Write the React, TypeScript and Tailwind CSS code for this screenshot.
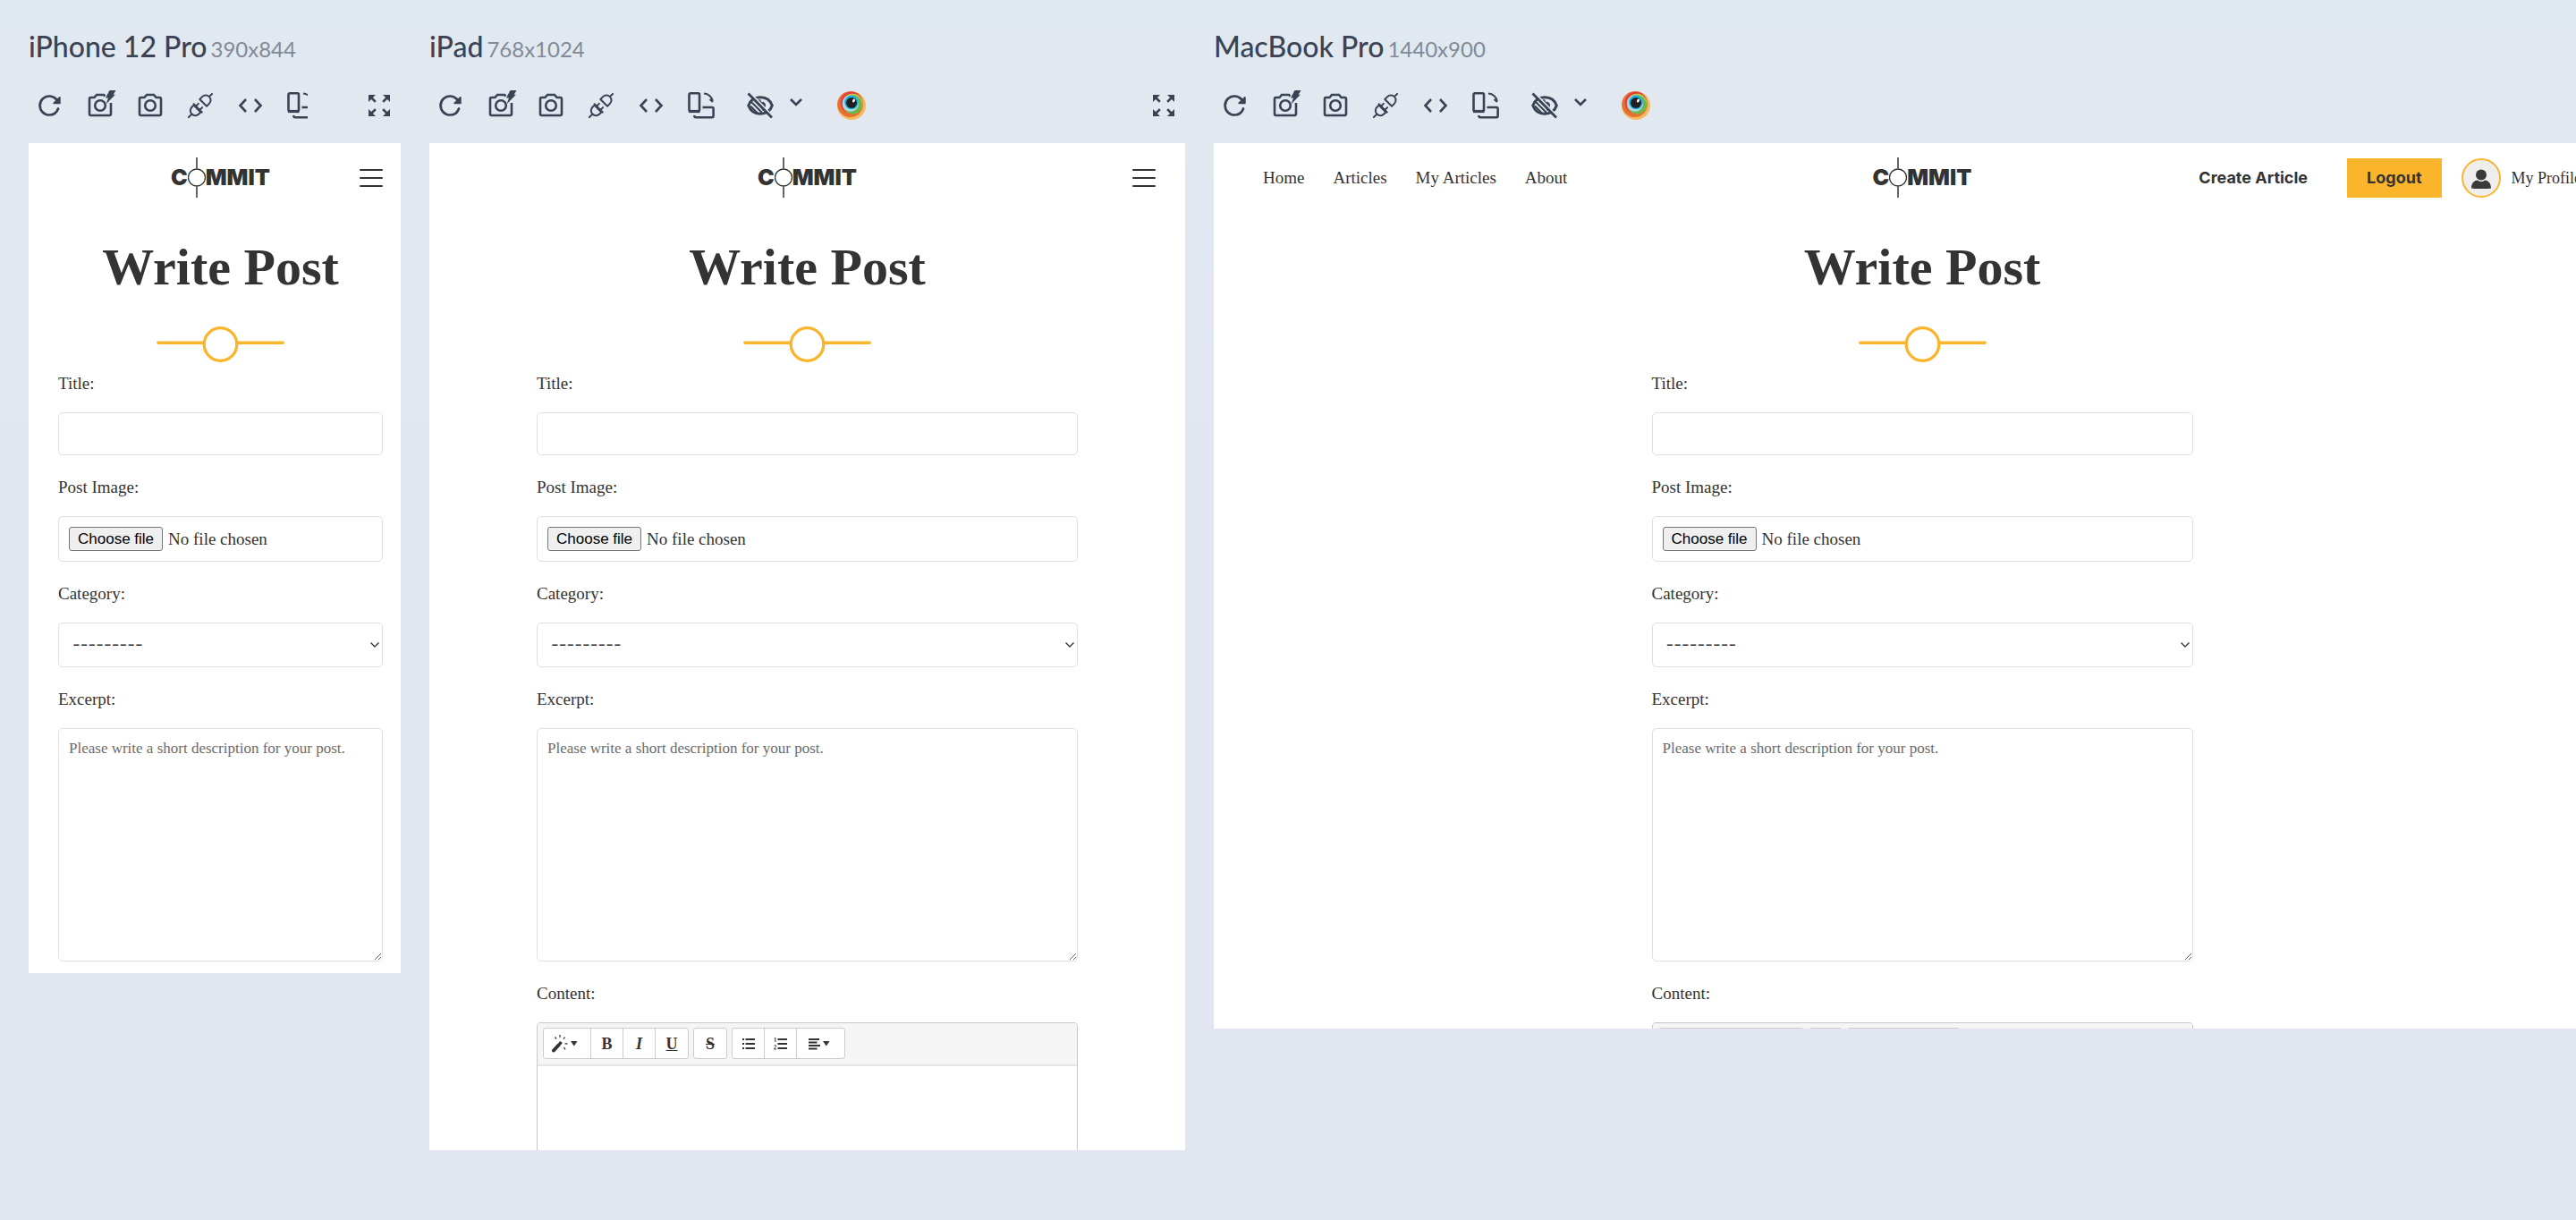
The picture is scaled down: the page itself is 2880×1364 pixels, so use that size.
import { useId } from "react";
import type { ReactNode } from "react";
import { MdZoomOutMap } from "react-icons/md";

const serif = "font-['Liberation_Serif',serif]";

/* ---------- device toolbar icons ---------- */

function ReloadIcon() {
  return (
    <svg viewBox="0 0 512 512" className="h-7 w-7" aria-hidden="true">
      <path
        d="M400 148l-21.12-24.57A191.43 191.43 0 00240 64C134 64 48 150 48 256s86 192 192 192a192.09 192.09 0 00181.07-128"
        fill="none"
        stroke="currentColor"
        strokeWidth="50"
        strokeLinecap="round"
      />
      <path
        d="M470 90V208a16 16 0 01-16 16H332c-14 0-21-17-11-27L443 79C453 69 470 76 470 90z"
        fill="currentColor"
      />
    </svg>
  );
}

function CameraIcon({ flash = false }: { flash?: boolean }) {
  return (
    <svg viewBox="0 0 32 32" className="h-8 w-8 overflow-visible" aria-hidden="true" fill="none">
      <path
        d={
          flash
            ? "M28 13v12.500a1.500 1.500 0 01-1.500 1.500h-21A1.500 1.500 0 014 25.500v-17A1.500 1.500 0 015.500 7H9.500l2.500-3h8l1.500 1.500"
            : "M5.500 7H9.500l2.500-3h8l2.500 3h4A1.500 1.500 0 0128 8.500v17a1.500 1.500 0 01-1.500 1.500h-21A1.500 1.500 0 014 25.500v-17A1.500 1.500 0 015.500 7z"
        }
        stroke="currentColor"
        strokeWidth="2.600"
      />
      <circle cx="16" cy="16" r="5.800" stroke="currentColor" strokeWidth="2.600" />
      {flash && <path d="M26.500-1h7l-2.800 4.800h2.200L22.500 14.500l2.500-7h-3z" fill="currentColor" />}
    </svg>
  );
}

function PlugIcon() {
  return (
    <svg viewBox="0 0 32 32" className="h-8 w-8 overflow-visible" aria-hidden="true">
      <g
        transform="translate(16 16) rotate(-45)"
        fill="none"
        stroke="currentColor"
        strokeWidth="2"
        strokeLinecap="round"
        strokeLinejoin="round"
      >
        <path d="M-18.500 0h4.500M-4 -6.500v13M-5-5.500h-3a5.500 5.500 0 000 11h3zM-4-3h4M-4 3h4" />
        <path d="M18.500 0h-4.500M4.500-5.500h4a5.500 5.500 0 010 11h-4z" />
      </g>
    </svg>
  );
}

function CodeIcon() {
  return (
    <svg viewBox="0 0 32 32" className="h-8 w-8" aria-hidden="true">
      <path
        d="M11 9L4.500 16l6.500 7M21 9l6.500 7-6.500 7"
        fill="none"
        stroke="currentColor"
        strokeWidth="2.600"
      />
    </svg>
  );
}

function RotateIcon() {
  return (
    <svg viewBox="0 0 32 32" className="h-8 w-8" aria-hidden="true" fill="none" stroke="currentColor">
      <rect x="2.500" y="2.300" width="11.500" height="20" rx="1.500" strokeWidth="2.600" />
      <path d="M2 22.500h12.500" strokeWidth="3.200" />
      <path
        d="M17.500 18h10.500a1.600 1.600 0 011.600 1.600v8a1.600 1.600 0 01-1.600 1.600H10a1.600 1.600 0 01-1.600-1.600V27"
        strokeWidth="2.600"
      />
      <path d="M19 2.500c5 .3 9.300 4 9.800 9M25.500 9l3.300 3" strokeWidth="2" />
    </svg>
  );
}

function EyeOffIcon() {
  return (
    <svg viewBox="0 0 32 32" className="h-8 w-8" aria-hidden="true" fill="none" stroke="currentColor">
      <path
        d="M2.800 16C5 10 10 6.800 16 6.800S27.200 10 29.300 16c-2.100 6-7.300 9.200-13.300 9.200S5 22 2.800 16z"
        strokeWidth="3"
      />
      <path
        d="M13 10.500c1-.8 2-1 3-.8-.4 2 1.500 3.300 3.300 2.600 3 1 3 6.300-.3 9.200z"
        fill="currentColor"
        strokeWidth="1"
      />
      <path d="M6 12l12 12M5 16.500l7.500 7.500" strokeWidth="2" />
      <path d="M5 2L31 29" stroke="#e1e8f0" strokeWidth="2" />
      <path d="M2.500 2.500l26.500 27" strokeWidth="2.800" />
    </svg>
  );
}

function EyeballLogo() {
  return (
    <svg viewBox="0 0 32 32" className="h-8 w-8" aria-hidden="true">
      <circle cx="16" cy="16" r="16" fill="#f6b95d" />
      <circle cx="14.600" cy="14.600" r="14.400" fill="#e76f32" />
      <circle cx="16" cy="12.800" r="12.300" fill="#e43d42" />
      <circle cx="17.200" cy="14" r="11.200" fill="#bdd04b" />
      <circle cx="17.600" cy="15" r="10.400" fill="#6cb64d" />
      <circle cx="15" cy="13.600" r="9.200" fill="#aedbe8" />
      <circle cx="16" cy="12.400" r="7.800" fill="#16b1dd" />
      <circle cx="16" cy="13" r="6" fill="#221f20" />
      <ellipse cx="18.500" cy="10.500" rx="1.300" ry="2" fill="#fff" transform="rotate(30 18.500 10.500)" />
    </svg>
  );
}

/* ---------- site drawings ---------- */

function Logo() {
  return (
    <a
      href="#"
      aria-label="Commit"
      className="flex items-center font-['Inter',sans-serif] text-[25px] leading-[45px] font-black text-[#333]"
    >
      <span>C</span>
      <svg viewBox="0 0 20 45" className="h-[45px] w-5" aria-hidden="true" fill="none" stroke="#333">
        <path d="M10 0v12.500M10 32.500V45" strokeWidth="1.500" />
        <circle cx="10" cy="22.500" r="9.500" strokeWidth="1.300" />
      </svg>
      <span>MMIT</span>
    </a>
  );
}

function Divider() {
  return (
    <svg
      viewBox="0 0 143 40"
      className="mt-[34px] -mb-3 h-10 w-[143px]"
      aria-hidden="true"
      fill="none"
      stroke="#fbb52d"
    >
      <path d="M1.800 18.200H52M91 18.200h50.200" strokeWidth="3.400" strokeLinecap="round" />
      <circle cx="71.500" cy="20" r="18.300" strokeWidth="3.300" />
    </svg>
  );
}

function Caret() {
  return (
    <svg viewBox="0 0 8 6" className="h-1.5 w-2" aria-hidden="true">
      <path d="M0 0h7.500L3.800 5.500z" fill="currentColor" />
    </svg>
  );
}

function WandIcon() {
  return (
    <svg viewBox="0 0 20 20" className="h-5 w-5" aria-hidden="true" fill="none" stroke="currentColor">
      <path d="M3 17.500l5.500-6" strokeWidth="4" strokeLinecap="round" />
      <path d="M9.500 10.500l2-2.500" strokeWidth="3.500" />
      <path
        d="M10 0v2.800M4.500 2.500l1.500 2M15.500 2.500l-1.500 2.200M15.500 9.800h3M14.500 14l1.500 2.500"
        strokeWidth="1.300"
      />
    </svg>
  );
}

function ListIcon({ ordered = false }: { ordered?: boolean }) {
  return (
    <svg viewBox="0 0 16 16" className="h-4 w-4" aria-hidden="true" fill="none" stroke="currentColor">
      <path d="M4.500 3H15M4.500 8H15M4.500 13H15" strokeWidth="2" />
      {ordered ? (
        <path d="M.8 2l1-.8V6M.5 10.200c.5-1 2.300-.8 2.200.4 0 1-2 2-2.200 3.400h2.500" strokeWidth="1" />
      ) : (
        <path d="M1 3h2M1 8h2M1 13h2" strokeWidth="2" />
      )}
    </svg>
  );
}

function AlignIcon() {
  return (
    <svg
      viewBox="0 0 16 16"
      className="h-4 w-4"
      aria-hidden="true"
      fill="none"
      stroke="currentColor"
      strokeWidth="1.800"
    >
      <path d="M2 3h12M2 6.500h9.500M2 10h13M2 13.500h9.500" />
    </svg>
  );
}

/* ---------- device frame ---------- */

function Tool({ label, children }: { label: string; children: ReactNode }) {
  return (
    <button type="button" aria-label={label} className="flex h-12 w-12 shrink-0 items-center justify-center">
      {children}
    </button>
  );
}

function Device({
  name,
  size,
  frame,
  screen,
  children,
}: {
  name: string;
  size: string;
  frame: string;
  screen: string;
  children: ReactNode;
}) {
  return (
    <section className={`shrink-0 ${frame}`}>
      <h2 className="flex items-baseline gap-1 font-['Lato',sans-serif] text-[32px] leading-10 font-medium whitespace-nowrap text-[#3a4254]">
        {name}
        <span className="text-2xl leading-8 font-normal text-[#828997]">{size}</span>
      </h2>
      <div className="mt-1 flex h-21 items-center gap-14 text-[#3a4254]">
        <div className="flex min-w-0 flex-1 gap-2 overflow-hidden">
          <Tool label="Reload">
            <ReloadIcon />
          </Tool>
          <Tool label="Quick screenshot">
            <CameraIcon flash />
          </Tool>
          <Tool label="Full page screenshot">
            <CameraIcon />
          </Tool>
          <Tool label="Disconnect from sync">
            <PlugIcon />
          </Tool>
          <Tool label="Open devtools">
            <CodeIcon />
          </Tool>
          <Tool label="Rotate">
            <RotateIcon />
          </Tool>
          <div className="ml-2.5 flex shrink-0 items-center gap-1">
            <Tool label="Vision simulation">
              <EyeOffIcon />
            </Tool>
            <button type="button" aria-label="Vision options" className="flex h-12 w-6 items-center justify-center">
              <svg viewBox="0 0 16 16" className="-mt-2 h-4 w-4" aria-hidden="true">
                <path d="M2 5l6 6 6-6" fill="none" stroke="currentColor" strokeWidth="2.600" />
              </svg>
            </button>
          </div>
          <div className="ml-[18px] shrink-0">
            <Tool label="Live testing">
              <EyeballLogo />
            </Tool>
          </div>
        </div>
        <Tool label="Maximize">
          <MdZoomOutMap className="h-8 w-8" />
        </Tool>
      </div>
      <div className={`overflow-hidden bg-white ${screen}`}>{children}</div>
    </section>
  );
}

/* ---------- site ---------- */

function CompactHeader() {
  return (
    <header className="grid h-[77px] grid-cols-[1fr_auto_1fr] items-center px-[33px]">
      <span />
      <Logo />
      <button type="button" aria-label="Menu" className="flex h-5 w-[26px] flex-col justify-between justify-self-end">
        <span className="h-0.5 w-full rounded-full bg-[#333]" />
        <span className="h-0.5 w-full rounded-full bg-[#333]" />
        <span className="h-0.5 w-full rounded-full bg-[#333]" />
      </button>
    </header>
  );
}

const links = ["Home", "Articles", "My Articles", "About"];

function WideHeader() {
  return (
    <header className="grid h-[77px] grid-cols-[1fr_auto_1fr] items-center px-[55px] text-[#333]">
      <nav className={`flex gap-8 text-[19px] leading-7 ${serif}`}>
        {links.map((l) => (
          <a key={l} href="#">
            {l}
          </a>
        ))}
      </nav>
      <Logo />
      <div className="flex items-center justify-end">
        <a href="#" className="font-['Inter',sans-serif] text-lg leading-6 font-bold">
          Create Article
        </a>
        <a
          href="#"
          className="ml-11 bg-[#fbb52d] px-[22px] py-2.5 font-['Inter',sans-serif] text-lg leading-6 font-bold"
        >
          Logout
        </a>
        <a href="#" className={`ml-[22px] flex items-center gap-3 text-lg leading-6 ${serif}`}>
          <svg viewBox="0 0 44 44" className="h-11 w-11" aria-hidden="true">
            <circle cx="22" cy="22" r="21" fill="#efeeec" stroke="#fbb52d" strokeWidth="2" />
            <circle cx="22" cy="18.500" r="6" fill="#3a3a3a" />
            <path d="M11 33.500c0-6 3-8.500 7-9 2.500 2 5.500 2 8 0 4 .5 7 3 7 9 0 .7-22 .7-22 0z" fill="#3a3a3a" />
          </svg>
          My Profile
        </a>
      </div>
    </header>
  );
}

const box = "block w-full rounded-[5px] border border-[#dee0e2] bg-white";

function FieldLabel({ htmlFor, children }: { htmlFor: string; children: ReactNode }) {
  return (
    <label htmlFor={htmlFor} className="block pt-[22px] pb-[18px] text-[19px] leading-7">
      {children}
    </label>
  );
}

function EditorGroup({ children }: { children: ReactNode }) {
  return (
    <div className="flex h-[35px] divide-x divide-[#ccc] rounded-[3px] border border-[#ccc] bg-white">{children}</div>
  );
}

function EditorButton({ label, wide = false, children }: { label: string; wide?: boolean; children: ReactNode }) {
  return (
    <button
      type="button"
      aria-label={label}
      className={`flex items-center justify-center gap-0.5 text-lg leading-6 ${wide ? "w-[53px] pr-1.5" : "w-9"}`}
    >
      {children}
    </button>
  );
}

function ContentEditor({ id }: { id: string }) {
  return (
    <>
      <FieldLabel htmlFor={id}>Content:</FieldLabel>
      <div className="overflow-hidden rounded-[4px] border border-[#c8c8c8]">
        <div className="flex gap-[5px] border-b-2 border-[#e6e6e6] bg-[#f5f5f5] px-1.5 pt-[5px] pb-1.5">
          <EditorGroup>
            <EditorButton label="Style" wide>
              <WandIcon />
              <Caret />
            </EditorButton>
            <EditorButton label="Bold">
              <b>B</b>
            </EditorButton>
            <EditorButton label="Italic">
              <b>
                <i>I</i>
              </b>
            </EditorButton>
            <EditorButton label="Underline">
              <b className="underline">U</b>
            </EditorButton>
          </EditorGroup>
          <EditorGroup>
            <EditorButton label="Strikethrough">
              <b className="line-through">S</b>
            </EditorButton>
          </EditorGroup>
          <EditorGroup>
            <EditorButton label="Bulleted list">
              <ListIcon />
            </EditorButton>
            <EditorButton label="Numbered list">
              <ListIcon ordered />
            </EditorButton>
            <EditorButton label="Paragraph" wide>
              <AlignIcon />
              <Caret />
            </EditorButton>
          </EditorGroup>
        </div>
        <textarea id={id} className="block h-[300px] w-full resize-none bg-white p-3 text-[17px]" />
      </div>
    </>
  );
}

function PostForm({ editor = false }: { editor?: boolean }) {
  const id = useId();
  return (
    <main className={`flex flex-col items-center px-[33px] text-[#333] ${serif}`}>
      <h1 className="mt-[30px] text-[58px] leading-16 font-bold">Write Post</h1>
      <Divider />
      <form className="w-full max-w-[605px]">
        <FieldLabel htmlFor={`${id}-title`}>Title:</FieldLabel>
        <input id={`${id}-title`} type="text" className={`${box} h-12 px-3 text-[17px]`} />

        <FieldLabel htmlFor={`${id}-image`}>Post Image:</FieldLabel>
        <label htmlFor={`${id}-image`} className={`${box} relative px-[11px] py-[11px]`}>
          <input id={`${id}-image`} type="file" className="sr-only" />
          <span className="flex items-center gap-1.5">
            <span className="rounded-[3px] border border-[#767676] bg-[#efefef] px-[9px] font-['Liberation_Sans',sans-serif] text-[17px] leading-[25px] text-black">
              Choose file
            </span>
            <span className="text-[19px] leading-[25px]">No file chosen</span>
          </span>
        </label>

        <FieldLabel htmlFor={`${id}-category`}>Category:</FieldLabel>
        <div className="relative">
          <select
            id={`${id}-category`}
            className={`${box} h-[50px] appearance-none px-[15px] font-['Inter',sans-serif] text-[19px] text-[#333]`}
          >
            <option>---------</option>
          </select>
          <svg
            viewBox="0 0 10 6"
            className="pointer-events-none absolute top-[22px] right-1 h-1.5 w-2.5"
            aria-hidden="true"
          >
            <path d="M.5.5L5 5 9.500.5" fill="none" stroke="#333" strokeWidth="1.300" />
          </svg>
        </div>

        <FieldLabel htmlFor={`${id}-excerpt`}>Excerpt:</FieldLabel>
        <textarea
          id={`${id}-excerpt`}
          placeholder="Please write a short description for your post."
          className={`${box} h-[261px] px-[11px] py-2.5 text-[17px] leading-6 placeholder:text-[#6c6c6c]`}
        />

        {editor && <ContentEditor id={`${id}-content`} />}
      </form>
    </main>
  );
}

export default function App() {
  return (
    <div className="flex min-h-screen gap-8 overflow-hidden bg-linear-to-b from-[#e1e9f0] to-[#e2e6f1] to-40% px-8 pt-8">
      <Device name="iPhone 12 Pro" size="390x844" frame="w-[416px]" screen="h-[928px]">
        <div className="w-[429px]">
          <CompactHeader />
          <PostForm />
        </div>
      </Device>
      <Device name="iPad" size="768x1024" frame="w-[845px]" screen="h-[1126px]">
        <CompactHeader />
        <PostForm editor />
      </Device>
      <Device name="MacBook Pro" size="1440x900" frame="w-[1584px]" screen="h-[990px]">
        <WideHeader />
        <PostForm editor />
      </Device>
    </div>
  );
}
